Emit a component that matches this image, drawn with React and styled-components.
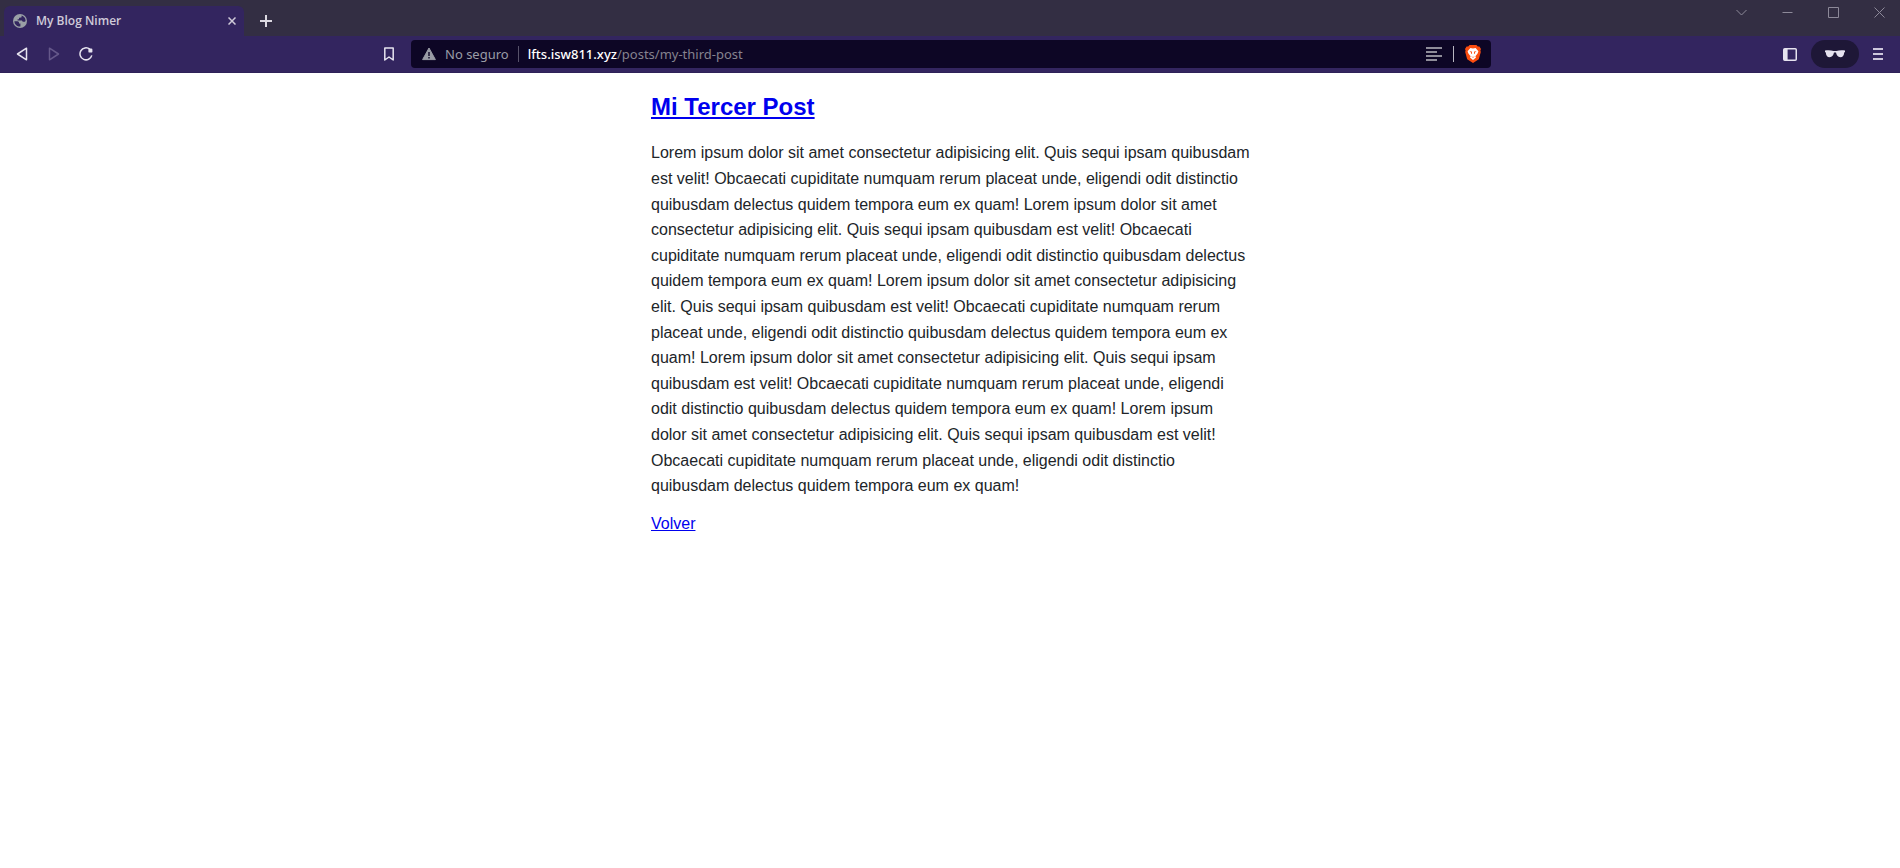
import React from "react";
import styled, { createGlobalStyle } from "styled-components";

const GlobalStyle = createGlobalStyle`
  *, *::before, *::after { box-sizing: border-box; }
  body {
    margin: 0;
    background: #fff;
    font-family: "Liberation Sans", Arial, sans-serif;
  }
`;

const Chrome = styled.header`
  background: #33255f;
  color: #fff;
  font-family: "Noto Sans", "Segoe UI", sans-serif;
`;

const IconButton = styled.button`
  display: flex;
  align-items: center;
  justify-content: center;
  flex: none;
  width: ${(p) => p.$w || 32}px;
  height: ${(p) => p.$h || 28}px;
  padding: 0;
  border: 0;
  border-radius: ${(p) => (p.$pill ? 14 : 4)}px;
  background: ${(p) => (p.$pill ? "#1e1737" : "transparent")};
  color: ${(p) => p.$color || "#e6e3ef"};
  svg { display: block; }
`;

const TabStrip = styled.div`
  display: flex;
  align-items: flex-start;
  height: 36px;
  padding-left: 4px;
  background: #332e43;
`;

const Tab = styled.div`
  display: flex;
  align-items: center;
  width: 240px;
  height: 30px;
  margin-top: 6px;
  padding-left: 9px;
  border-radius: 6px 6px 0 0;
  background: #33255f;
  svg { flex: none; }
`;

const TabTitle = styled.span`
  flex: 1;
  padding-left: 9px;
  color: #cfcad9;
  font-family: "Open Sans", "Segoe UI", sans-serif;
  font-size: 12px;
  font-weight: 600;
  line-height: 16px;
  white-space: nowrap;
`;

const NewTab = styled.div`
  padding: 7px 0 0 6px;
`;

const WindowControls = styled.div`
  display: flex;
  margin-left: auto;
  margin-right: -2px;
`;

const Toolbar = styled.nav`
  display: grid;
  grid-template-columns: 1fr minmax(0, 1080px) 1fr;
  align-items: center;
  height: 37px;
  padding-left: 2px;
  border-bottom: 1px solid #2e2158;
`;

const Side = styled.div`
  display: flex;
  align-items: center;
  justify-content: ${(p) => (p.$end ? "flex-end" : "flex-start")};
  padding: ${(p) => (p.$end ? "0 4px 0 0" : "0 6px 0 4px")};
`;

const Spacer = styled.div`
  flex: 1;
`;

const AddressBar = styled.form`
  display: flex;
  align-items: center;
  height: 28px;
  border-radius: 4px;
  padding-left: 11px;
  background: #0d0625;
  font-size: 13px;
  line-height: 20px;
  white-space: nowrap;
`;

const Security = styled.span`
  padding: 0 9px;
  color: #9a9ca6;
`;

const Divider = styled.span`
  flex: none;
  width: 1px;
  height: 16px;
  background: ${(p) => p.$color};
`;

const Url = styled.a`
  flex: 1;
  padding-left: 9px;
  color: #fff;
  font-weight: 500;
  text-decoration: none;
`;

const Path = styled.span`
  color: #85838f;
  font-weight: 400;
`;

const Article = styled.main`
  max-width: 600px;
  margin: 15px auto;
  padding-left: 1px;
  color: #212529;
  font-size: 16px;
  line-height: 1.6;
`;

const Title = styled.h1`
  margin: 0 0 14px;
  font-size: 24px;
`;

const Body = styled.p`
  margin: 0 0 12px;
`;

const Link = styled.a`
  color: #0000ee;
`;

const Globe = () => (
  <svg width="14" height="14" viewBox="0 0 14 14" aria-hidden="true">
    <circle cx="7" cy="7" r="7" fill="#9aa0a6" />
    <path d="M1.4 7.2 4.4 7.3C5.6 7.4 6 8 6 8.8V9.4H7.4V12.6C4.2 12.8 1.4 10.4 1.4 7.2ZM8.6 1.6V2.6C8.6 3.4 8 3.8 7.2 3.8H6V5.2H4.6V6.4H8.4C9.2 6.4 9.6 7 9.6 7.8H11.4C12.2 7.8 12.4 7 12.6 6.4 12.4 3.8 10.8 2.2 8.6 1.6Z" fill="#33255f" />
  </svg>
);

const Triangle = ({ flip }) => (
  <svg width="12" height="14" viewBox="0 0 12 14" fill="none" stroke="currentColor" strokeWidth="1.5" strokeLinejoin="round" aria-hidden="true">
    <path d={flip ? "M1.5 1.2v11.6L10.5 7Z" : "M10.5 1.2v11.6L1.5 7Z"} />
  </svg>
);

const Reload = () => (
  <svg width="14" height="14" viewBox="0 0 14 14" aria-hidden="true">
    <path d="M10.8 2.2A6 6 0 1 0 12.8 8.4" fill="none" stroke="currentColor" strokeWidth="1.5" />
    <rect x="9.4" y="1.6" width="4" height="4" rx="1.2" fill="currentColor" />
  </svg>
);

const Bookmark = () => (
  <svg width="10" height="14" viewBox="0 0 10 14" fill="none" stroke="currentColor" strokeWidth="1.5" aria-hidden="true">
    <path d="M.8 1h8.4v12L5 10 .8 13Z" strokeLinejoin="round" />
  </svg>
);

const Warning = () => (
  <svg width="14" height="14" viewBox="0 0 14 14" aria-hidden="true">
    <path d="M7 1 13.4 12.6H.6Z" fill="#9a9ca6" stroke="#9a9ca6" strokeLinejoin="round" />
    <path d="M7 5v4M7 10v1.4" stroke="#0d0625" strokeWidth="1.4" />
  </svg>
);

const Reader = () => (
  <svg width="16" height="14" viewBox="0 0 16 14" stroke="currentColor" strokeWidth="2" aria-hidden="true">
    <path d="M0 1h16M0 5h11M0 9h16M0 13h11" />
  </svg>
);

const Lion = () => (
  <svg width="16" height="18" viewBox="0 0 16 18" aria-hidden="true">
    <path d="M4.6 0h6.8l1.4 1.6 1.6-.2L16 4l-.6 1.6.4 1.4-2 7.2L8 18l-5.8-3.8L.2 7l.4-1.4L0 4l1.6-2.6 1.6.2Z" fill="#fb4d10" />
    <path d="M8 3.4 10.6 3 13.4 6.2 12.6 8.4 10.4 11.2 11 12.4 8 15 5 12.4 5.6 11.2 3.4 8.4 2.6 6.2 5.4 3Z" fill="#fff" />
    <path d="M4.4 6.2 6.8 6.6 7 7.2 6.9 9 6.3 9 6 7.4ZM11.6 6.2 9.2 6.6 9 7.2 9.1 9 9.7 9 10 7.4ZM6 11.2 8 12 10 11.2 8 12.7Z" fill="#fb4d10" />
  </svg>
);

const Panel = () => (
  <svg width="14" height="13" viewBox="0 0 14 13" aria-hidden="true">
    <rect x=".75" y=".75" width="12.5" height="11.5" rx="1" fill="none" stroke="currentColor" strokeWidth="1.5" />
    <path d="M1 1h3.6v11H1Z" fill="currentColor" />
  </svg>
);

const Glasses = () => (
  <svg width="20" height="8" viewBox="0 0 20 8" fill="currentColor" aria-hidden="true">
    <path d="M0 .4C3 0 6 0 8.6 1h2.8C14 0 17 0 20 .4V2l-.8.4C19 5.4 17.8 7.2 15.4 7.2 12.8 7.2 11.4 5.2 11 2.6H9C8.6 5.2 7.2 7.2 4.6 7.2 2.2 7.2 1 5.4.8 2.4L0 2Z" />
  </svg>
);

const Menu = () => (
  <svg width="10" height="12" viewBox="0 0 10 12" stroke="currentColor" strokeWidth="2" aria-hidden="true">
    <path d="M0 1h10M0 6h10M0 11h10" />
  </svg>
);

const Line = ({ d, size = 11, width = 1 }) => (
  <svg width={size} height={size} viewBox={`0 0 ${size} ${size}`} fill="none" stroke="currentColor" strokeWidth={width} aria-hidden="true">
    <path d={d} />
  </svg>
);

const windowButtons = [
  ["Buscar pestañas", "M.5 3 5.5 8 10.5 3"],
  ["Minimizar", "M.5 5.5h10"],
  ["Maximizar", "M.5.5h10v10H.5Z"],
  ["Cerrar", "M.5.5l10 10M10.5.5l-10 10"],
];

const sentence =
  "Lorem ipsum dolor sit amet consectetur adipisicing elit. Quis sequi ipsam quibusdam est velit! Obcaecati cupiditate numquam rerum placeat unde, eligendi odit distinctio quibusdam delectus quidem tempora eum ex quam!";

export default function App() {
  return (
    <>
      <GlobalStyle />
      <Chrome>
        <TabStrip>
          <Tab>
            <Globe />
            <TabTitle>My Blog Nimer</TabTitle>
            <IconButton $w={24} $h={24} $color="#cfcad9" aria-label="Cerrar pestaña">
              <Line size={8} width={1.5} d="M.5.5l7 7M7.5.5l-7 7" />
            </IconButton>
          </Tab>
          <NewTab>
            <IconButton $w={32} $color="#dcd9e2" aria-label="Nueva pestaña">
              <Line size={12} width={2} d="M6 0v12M0 6h12" />
            </IconButton>
          </NewTab>
          <WindowControls>
            {windowButtons.map(([label, d]) => (
              <IconButton key={label} $w={46} $h={24} $color="#8d8999" aria-label={label}>
                <Line d={d} />
              </IconButton>
            ))}
          </WindowControls>
        </TabStrip>
        <Toolbar>
          <Side>
            <IconButton aria-label="Atrás"><Triangle /></IconButton>
            <IconButton $color="#65588a" aria-label="Adelante"><Triangle flip /></IconButton>
            <IconButton aria-label="Recargar"><Reload /></IconButton>
            <Spacer />
            <IconButton aria-label="Marcador"><Bookmark /></IconButton>
          </Side>
          <AddressBar>
            <Warning />
            <Security>No seguro</Security>
            <Divider $color="#57526a" />
            <Url href="#">lfts.isw811.xyz<Path>/posts/my-third-post</Path></Url>
            <IconButton type="button" $w={38} $color="#8f8d99" aria-label="Modo lectura"><Reader /></IconButton>
            <Divider $color="#b9b7c2" />
            <IconButton type="button" $w={37} aria-label="Brave Shields"><Lion /></IconButton>
          </AddressBar>
          <Side $end>
            <IconButton $w={42} aria-label="Barra lateral"><Panel /></IconButton>
            <IconButton $w={48} $pill aria-label="Ventana privada"><Glasses /></IconButton>
            <IconButton $w={37} $color="#cdc7dc" aria-label="Menú"><Menu /></IconButton>
          </Side>
        </Toolbar>
      </Chrome>
      <Article>
        <Title><Link href="#">Mi Tercer Post</Link></Title>
        <Body>{Array(5).fill(sentence).join(" ")}</Body>
        <Link href="#">Volver</Link>
      </Article>
    </>
  );
}
